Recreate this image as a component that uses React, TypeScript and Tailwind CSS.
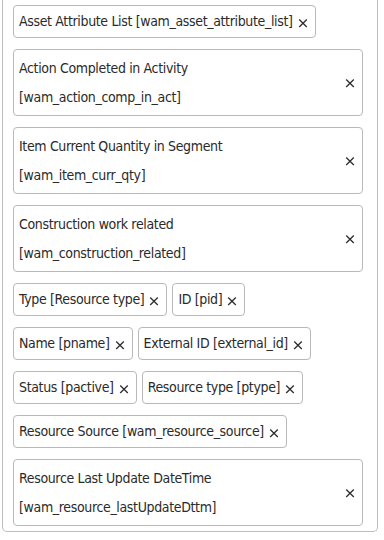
import React from "react"

interface Attr {
  label: string
  code: string
  wrap?: boolean
}

const attrs: Attr[] = [
  { label: "Asset Attribute List", code: "wam_asset_attribute_list" },
  { label: "Action Completed in Activity", code: "wam_action_comp_in_act", wrap: true },
  { label: "Item Current Quantity in Segment", code: "wam_item_curr_qty", wrap: true },
  { label: "Construction work related", code: "wam_construction_related", wrap: true },
  { label: "Type", code: "Resource type" },
  { label: "ID", code: "pid" },
  { label: "Name", code: "pname" },
  { label: "External ID", code: "external_id" },
  { label: "Status", code: "pactive" },
  { label: "Resource type", code: "ptype" },
  { label: "Resource Source", code: "wam_resource_source" },
  { label: "Resource Last Update DateTime", code: "wam_resource_lastUpdateDttm", wrap: true },
]

function CloseX() {
  return (
    <svg width="10" height="10" viewBox="0 0 10 10" className="shrink-0">
      <path d="M1.2 1.5 L8.8 9 M8.8 1.5 L1.2 9" stroke="#2e2e2e" strokeWidth="1.3" />
    </svg>
  )
}

function Chip({ attr }: { attr: Attr }) {
  if (attr.wrap) {
    return (
      <div className="flex w-full items-center justify-between rounded-[4px] border border-[#b9b9b9] bg-white py-[3.5px] pl-[5px] pr-[7px]">
        <div className="leading-[29px]">
          <div>{attr.label}</div>
          <div>[{attr.code}]</div>
        </div>
        <CloseX />
      </div>
    )
  }
  return (
    <div className="inline-flex items-center rounded-[4px] border border-[#b9b9b9] bg-white py-[1px] pl-[5px] pr-[7px] leading-[29px]">
      <span className="whitespace-nowrap">
        {attr.label} [{attr.code}]
      </span>
      <span className="ml-[5px] flex items-center pt-[2px]">
        <CloseX />
      </span>
    </div>
  )
}

export default function App() {
  return (
    <div className="h-[540px] w-[384px] bg-white">
      <div
        className="ml-[2px] w-[376px] rounded-b-[5px] border border-t-0 border-[#bdbdbd] pb-[5px] pl-[10px] pr-[14px] pt-[5px] text-[14px] tracking-[-0.35px] text-[#2a2a2a]"
        style={{ fontFamily: '"Liberation Sans Narrow", "DejaVu Sans Condensed", "Liberation Sans", sans-serif' }}
      >
        <div className="flex flex-wrap gap-x-[5px] gap-y-[11px]">
          {attrs.map((a) => (
            <Chip key={a.code} attr={a} />
          ))}
        </div>
      </div>
    </div>
  )
}
